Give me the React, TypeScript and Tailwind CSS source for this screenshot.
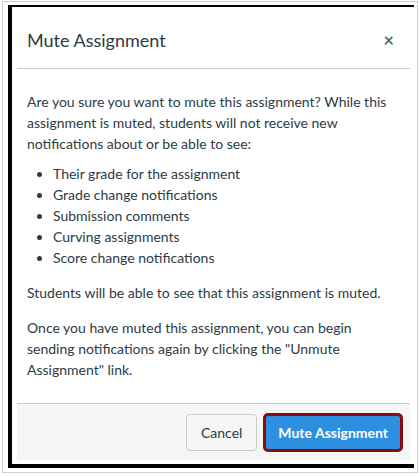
export default function App() {
  const items = [
    'Their grade for the assignment',
    'Grade change notifications',
    'Submission comments',
    'Curving assignments',
    'Score change notifications',
  ];

  return (
    <div className="w-[420px] h-[476px] bg-white pt-[1px] px-[2px] font-[Lato,'Liberation_Sans',sans-serif] text-[#2d3b45]">
      <div className="h-[472px] border border-[#cfcfcf] pt-[3px] pl-[5px] pr-[3px]">
        <div className="h-[463px] border-t-2 border-l-4 border-b-4 border-black pt-[5px] pl-[5px] pr-[4px] pb-[4px] flex flex-col">
          <div className="flex-1 flex flex-col bg-white">
            {/* header */}
            <div className="h-[57px] shrink-0 flex items-center justify-between pl-[10px] pr-[16px] border-b border-[#c7cdd1]">
              <h3 className="text-[18px] leading-none">Mute Assignment</h3>
              <button className="text-[#666] text-[18px] font-bold leading-none">×</button>
            </div>

            {/* body */}
            <div className="flex-1 px-[10px] pt-[22px] text-[14px] leading-[21px]">
              <p>
                Are you sure you want to mute this assignment? While this assignment is muted, students will not receive new notifications about or be able to see:
              </p>
              <ul className="list-disc pl-[26px] mt-[9px] mb-[14px]">
                {items.map(item => (
                  <li key={item}>{item}</li>
                ))}
              </ul>
              <p className="mb-[14px]">Students will be able to see that this assignment is muted.</p>
              <p>
                Once you have muted this assignment, you can begin sending notifications again by clicking the "Unmute Assignment" link.
              </p>
            </div>

            {/* footer */}
            <div className="h-[57px] shrink-0 bg-[#f5f5f5] border-t border-[#c7cdd1] flex items-center justify-end gap-[6px] pr-[7px]">
              <button className="h-[37px] px-[14px] rounded-[4px] border border-[#c7cdd1] bg-[#f5f5f5] text-[14px] text-[#2d3b45]">
                Cancel
              </button>
              <button className="h-[39px] px-[12px] rounded-[5px] border-[3px] border-[#8b0a0a] bg-[#2d8fe0] text-white text-[14px] font-bold">
                Mute Assignment
              </button>
            </div>
          </div>
        </div>
      </div>
    </div>
  );
}
